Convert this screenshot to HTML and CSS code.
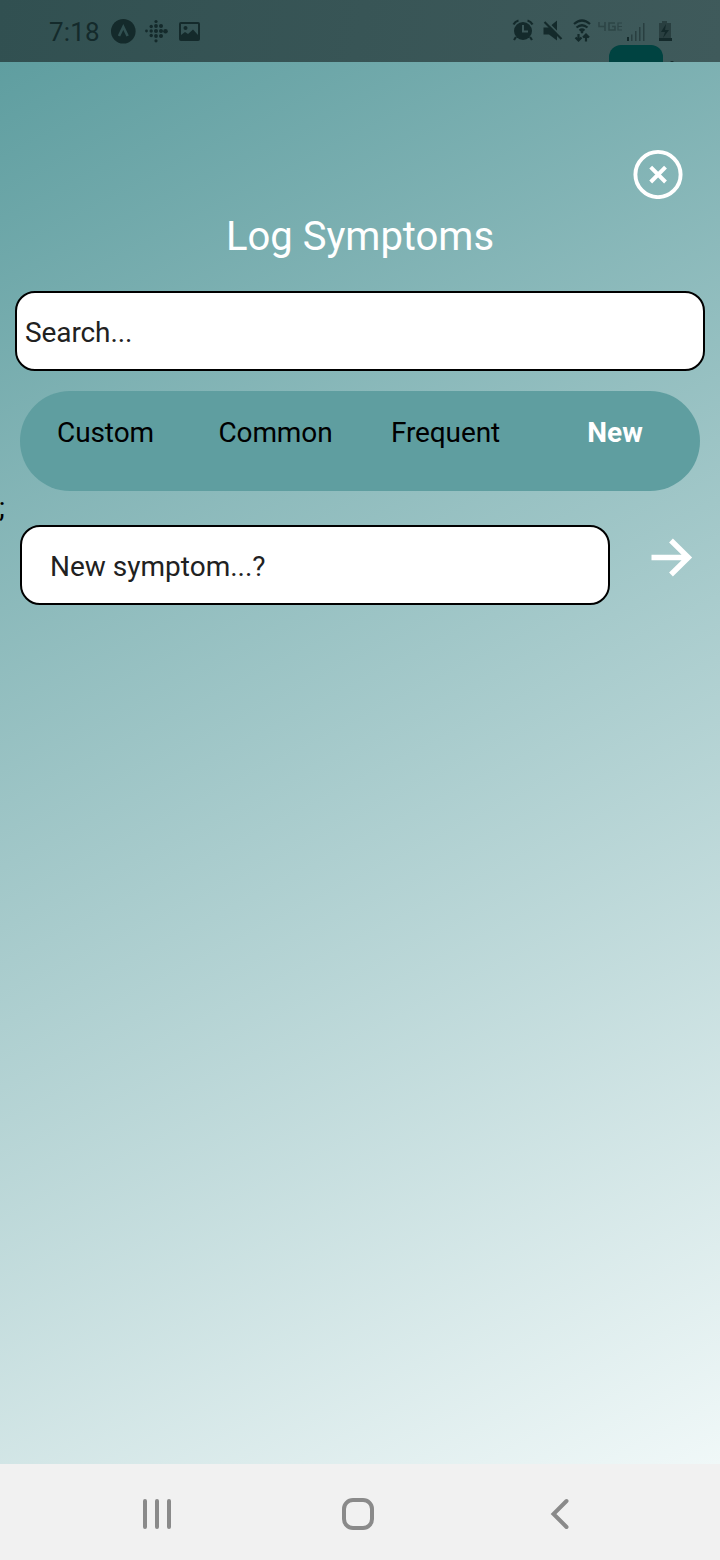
FILE: index.html
```html
<!DOCTYPE html>
<html lang="en">
<head>
<meta charset="utf-8">
<title>Log Symptoms</title>
<link rel="stylesheet" href="styles.css">
</head>
<body>
<div class="phone">
  <header class="status">
    <span class="clock">7:18</span>
    <svg class="status-left" width="92" height="26" viewBox="0 0 92 26">
      <circle cx="13.300" cy="13.300" r="12.300"/>
      <path class="logo-a" d="M9 18L13.300 9L17.600 18"/>
      <g>
        <circle cx="46" cy="3.500" r="1.600"/><circle cx="46" cy="8" r="1.900"/><circle cx="46" cy="13" r="2"/><circle cx="46" cy="18" r="1.900"/><circle cx="46" cy="22.800" r="1.600"/>
        <circle cx="36.500" cy="13" r="1.400"/><circle cx="41.200" cy="8.500" r="1.700"/><circle cx="41.200" cy="13" r="1.700"/><circle cx="41.200" cy="17.500" r="1.700"/>
        <circle cx="51" cy="8" r="2"/><circle cx="51" cy="13" r="2"/><circle cx="51" cy="18" r="2"/><circle cx="55.500" cy="13.200" r="2.300"/>
      </g>
      <path fill-rule="evenodd" d="M71 4h17a2 2 0 0 1 2 2v15a2 2 0 0 1-2 2h-17a2 2 0 0 1-2-2v-15a2 2 0 0 1 2-2zM71 6v11l4-3 3 2 5-4.500 5 5.500v-11z"/>
      <circle cx="75.500" cy="10" r="2"/>
    </svg>
    <svg class="status-right" width="164" height="26" viewBox="0 0 164 26">
      <path d="M4 19l-2 3M18 19l2 3M1.500 6.500Q3 3.500 6.500 2.500M15.500 2.500Q19 3.500 20.500 6.500" fill="none" stroke="#142a2b" stroke-width="2.200"/>
      <circle cx="11" cy="13" r="9"/>
      <path d="M11 7v6.500h5" fill="none" stroke="#3c5758" stroke-width="2"/>
      <path d="M31.500 9.500h5l8.500-7v20l-8-6h-5.500z"/>
      <path d="M34 3l16 16" stroke="#3c5758" stroke-width="1.800"/>
      <path d="M32.500 4l17 17" stroke="#142a2b" stroke-width="2.200"/>
      <g fill="none" stroke="#142a2b" stroke-width="2.200"><path d="M62 6q8-7 16 0M64.500 9.500q5.500-4.500 11 0M67.500 12.500q2.500-2 5 0"/><path d="M66.500 16v6.500M63.500 19.500l3 3 3-3M74 23.500v-7M71 19.500l3-3 3 3"/></g>
      <circle cx="70" cy="14" r="1.400"/>
      <g fill="none" stroke="#2d4546" stroke-width="1.600"><path d="M87 4v4.500h6.500M93 4v9M103 5h-6v7h6V8.500h-3"/><path stroke-width="1.200" d="M110 5h-4v7h4M106 8.500h4"/></g>
      <path d="M115 19h2v4h-2z"/><path fill="#293f40" d="M119 16.500h1.500v6.500H119zM123 13h1.500v10H123zM127 9h1.500v14H127zM131 5h1.500v18H131z"/>
      <path fill="#293f40" d="M150 3h5v2h4v16h-12V5h3z"/><path d="M147 20h13v3h-13zM154 6l-5 8h4l-2 6 6-8h-4z"/>
    </svg>
    <span class="backdrop-button"></span><span class="backdrop-dot"></span>
  </header>
  <main class="screen">
    <div class="close-row">
      <svg width="50" height="50" viewBox="0 0 50 50"><circle cx="25" cy="25.500" r="22.600" fill="none" stroke="#fff" stroke-width="3.900"/><path d="M17.700 18.200l14.800 14.800M32.500 18.200l-14.800 14.800" stroke="#fff" stroke-width="4"/></svg>
    </div>
    <h1 class="title">Log Symptoms</h1>
    <div class="field search">Search...</div>
    <nav class="tabs">
      <span class="tab">Custom</span><span class="tab">Common</span><span class="tab">Frequent</span><span class="tab active">New</span>
    </nav>
    <div class="stray">;</div>
    <div class="entry">
      <div class="field new-symptom">New symptom...?</div>
      <svg class="arrow" width="42" height="40" viewBox="0 0 42 40"><path d="M0.500 19.500H37M20 2.500L37.300 19.500L20 36.500" fill="none" stroke="#fff" stroke-width="5.400"/></svg>
    </div>
  </main>
  <footer class="navbar">
    <svg width="720" height="96" viewBox="0 0 720 96" fill="none" stroke="#8a8a8a" stroke-width="4">
      <path d="M145 37v26M157 37v26M169 37v26" stroke-linecap="round"/>
      <rect x="344" y="36" width="28" height="28" rx="9"/>
      <path d="M566.500 37L553.500 50L566.500 63" stroke-linecap="round"/>
    </svg>
  </footer>
</div>
</body>
</html>
```
FILE: styles.css
```css
* { box-sizing: border-box; }
body { margin: 0; font-family: Roboto, sans-serif; }
.phone { width: 720px; height: 1560px; display: flex; flex-direction: column; overflow: hidden; }
.status { position: relative; height: 62px; flex: none; display: flex; align-items: flex-start; padding: 18px 44px 0 49px; background: linear-gradient(100deg, #315051, #3f5a5b); overflow: hidden; }
.status svg { fill: #142a2b; flex: none; }
.clock { width: 61px; font-size: 26px; line-height: 29px; letter-spacing: 0.2px; color: #142a2b; }
.logo-a { fill: none; stroke: #315051; stroke-width: 2.6; }
.status-right { margin-left: auto; }
.backdrop-button { position: absolute; left: 609px; top: 45px; width: 54px; height: 30px; border-radius: 12px; background: #004341; }
.backdrop-dot { position: absolute; left: 670px; top: 61px; width: 4px; height: 4px; border-radius: 2px; background: #142a2b; }
.screen { flex: 1; background: linear-gradient(152.8deg, #5f9ea0, #f0f8f8); }
.close-row { display: flex; justify-content: flex-end; padding: 87px 37px 0 0; }
.close-row svg { display: block; }
.title { margin: 13px 0 0; height: 50px; line-height: 50px; text-align: center; font-size: 40px; font-weight: 400; color: #fff; }
.field { height: 80px; border: 2px solid #000; border-radius: 20px; background: #fff; color: #212121; font-size: 28px; line-height: 80px; white-space: nowrap; }
.search { margin: 29px 15px 0; padding-left: 8px; letter-spacing: -0.1px; }
.tabs { margin: 20px 20px 0; height: 100px; border-radius: 50px; background: #5f9ea0; display: grid; grid-template-columns: repeat(4, 170px); text-align: center; font-size: 28px; line-height: 84px; color: #000; }
.tab { letter-spacing: -0.1px; padding-left: 1px; }
.active { color: #fff; font-weight: 700; letter-spacing: 0; padding-left: 0; }
.stray { height: 34px; margin-left: -1px; font-size: 28px; line-height: 34px; color: #000; }
.entry { display: flex; padding-left: 20px; }
.new-symptom { width: 590px; padding-left: 28px; }
.arrow { margin: 13px 0 0 41px; }
.navbar { height: 96px; flex: none; background: #f1f1f1; }
.navbar svg { display: block; }
```
